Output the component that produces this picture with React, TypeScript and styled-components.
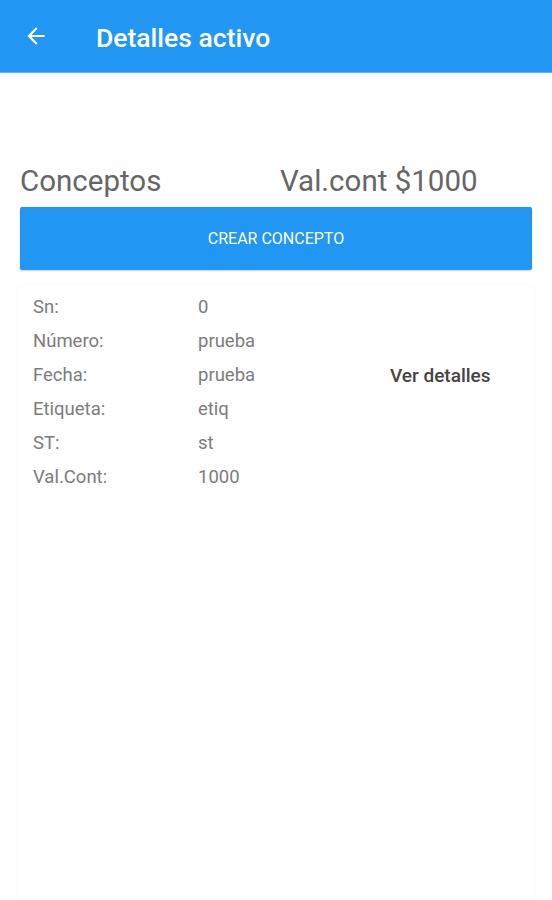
import React from 'react'
import styled, { createGlobalStyle } from 'styled-components'

const GlobalStyle = createGlobalStyle`
  html, body {
    margin: 0;
    padding: 0;
    background: #ffffff;
    font-family: Roboto, "Noto Sans", Arial, sans-serif;
  }
`

const Screen = styled.div`
  width: 552px;
  height: 900px;
  display: flex;
  flex-direction: column;
  overflow: hidden;
`

const Toolbar = styled.header`
  height: 73px;
  background: #2196f3;
  display: flex;
  align-items: center;
  padding-left: 22px;
  box-sizing: border-box;
  border-bottom: 1px solid #64b5f6;
`

const BackButton = styled.button`
  width: 28px;
  height: 28px;
  padding: 0;
  border: none;
  background: transparent;
  display: flex;
  align-items: center;
  justify-content: center;
  margin-right: 46px;
`

const Title = styled.h1`
  margin: 0 0 -2px;
  color: #ffffff;
  font-size: 26.5px;
  font-weight: 500;
`

const Content = styled.main`
  flex: 1;
  display: flex;
  flex-direction: column;
  padding: 0 20px;
  padding-top: 91px;
`

const Summary = styled.div`
  display: flex;
  align-items: baseline;
  height: 43px;
`

const SummaryText = styled.span<{ width?: number }>`
  font-size: 29.5px;
  color: #666666;
  width: ${p => (p.width ? `${p.width}px` : 'auto')};
`

const CreateButton = styled.button`
  height: 63px;
  border: none;
  border-radius: 2px;
  background: #2196f3;
  color: #ffffff;
  font-family: Roboto, sans-serif;
  font-size: 16px;
  text-transform: uppercase;
  box-shadow: 0 1px 2px rgba(0, 0, 0, 0.2);
`

const Card = styled.section`
  flex: 1;
  margin: 14px -3px 0;
  background: #fefefe;
  box-shadow: 0 0 2px rgba(0, 0, 0, 0.04);
  display: flex;
  align-items: flex-start;
  padding: 6px 16px 0;
`

const Fields = styled.dl`
  margin: 0;
  display: grid;
  grid-template-columns: 165px 192px;
  grid-auto-rows: 34px;
  align-items: center;
`

const Label = styled.dt`
  font-size: 18.5px;
  color: #7d7d7d;
`

const Value = styled.dd`
  margin: 0;
  font-size: 18.5px;
  color: #7d7d7d;
`

const DetailsLink = styled.span`
  margin-top: 74px;
  font-size: 19px;
  font-weight: 500;
  color: #444444;
`

const fields = [
  ['Sn:', '0'],
  ['Número:', 'prueba'],
  ['Fecha:', 'prueba'],
  ['Etiqueta:', 'etiq'],
  ['ST:', 'st'],
  ['Val.Cont:', '1000'],
]

export default function App() {
  return (
    <Screen>
      <GlobalStyle />
      <Toolbar>
        <BackButton aria-label="Volver">
          <svg width="26" height="26" viewBox="0 0 24 24">
            <path d="M20 11H7.83l5.59-5.59L12 4l-8 8 8 8 1.41-1.41L7.83 13H20v-2z" fill="#ffffff" />
          </svg>
        </BackButton>
        <Title>Detalles activo</Title>
      </Toolbar>
      <Content>
        <Summary>
          <SummaryText width={260}>Conceptos</SummaryText>
          <SummaryText>Val.cont $1000</SummaryText>
        </Summary>
        <CreateButton>Crear concepto</CreateButton>
        <Card>
          <Fields>
            {fields.map(([label, value]) => (
              <React.Fragment key={label}>
                <Label>{label}</Label>
                <Value>{value}</Value>
              </React.Fragment>
            ))}
          </Fields>
          <DetailsLink>Ver detalles</DetailsLink>
        </Card>
      </Content>
    </Screen>
  )
}
